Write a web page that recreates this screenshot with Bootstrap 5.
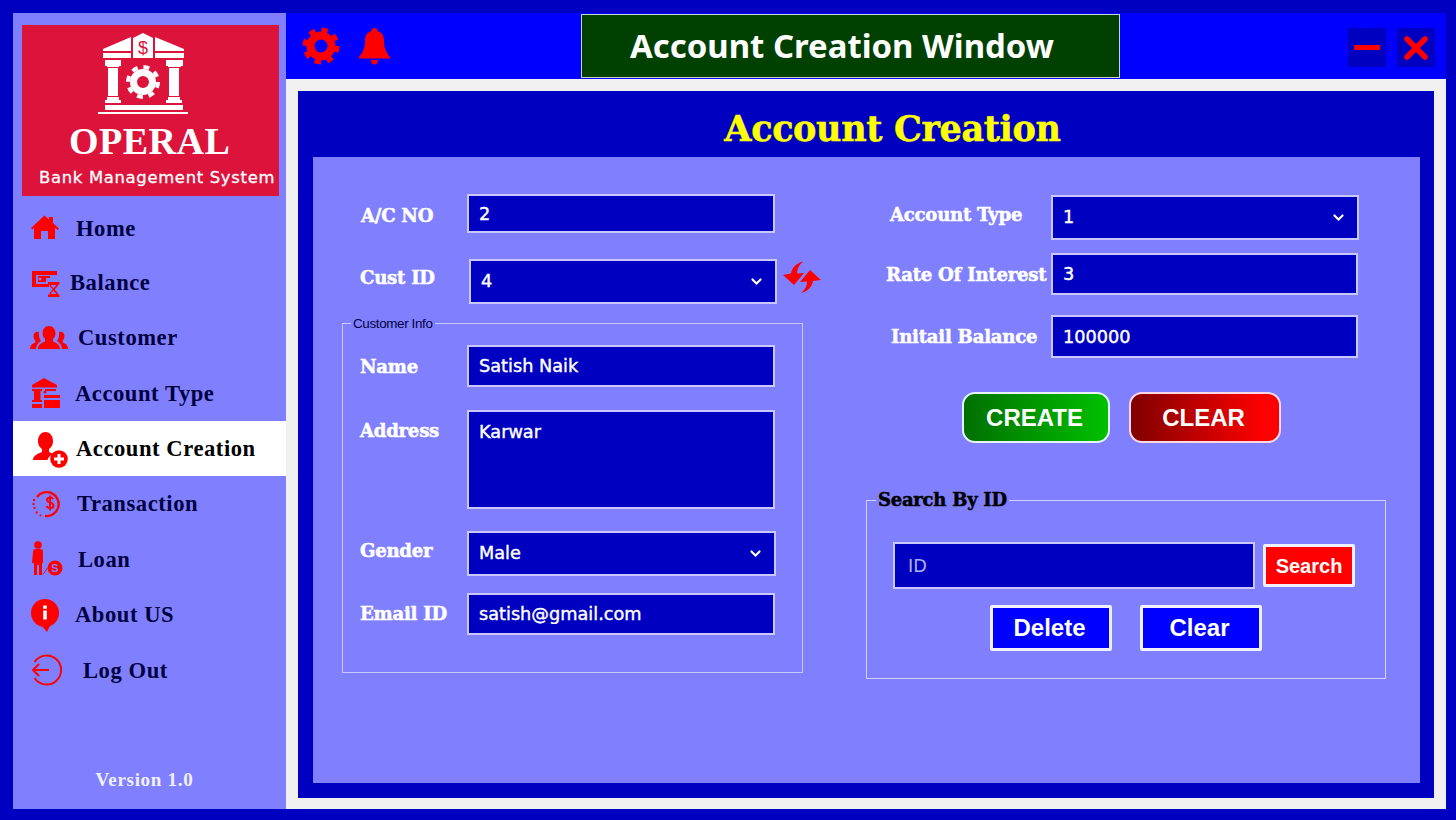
<!DOCTYPE html>
<html lang="en">
<head>
<meta charset="utf-8">
<title>Account Creation</title>
<link href="https://cdn.jsdelivr.net/npm/bootstrap@5.3.0/dist/css/bootstrap.min.css" rel="stylesheet">
<style>
html,body{height:100%;margin:0;overflow:hidden;background:#0000c0}
.app-shell{width:1456px;height:820px;padding:13px 10px 11px 13px;background:#0000c0}
.side-bar{width:273px;background:#8080ff;flex:none}
.logo-box{background:#dc143c;height:171px;margin:12px 7px 0 9px;color:#fff}
.logo-art{display:block;margin:8px 0 0 76px}
.logo-name{font:700 38px/1 "Liberation Serif",serif;margin:5px 0 0 47px;white-space:nowrap;letter-spacing:.5px}
.logo-sub{font:400 16.4px/1 "DejaVu Sans",sans-serif;margin:10px 0 0 17px;white-space:nowrap;letter-spacing:.7px;-webkit-text-stroke:.3px #fff}
.nav-stack{margin-top:3px}
.nav-row{height:55.4px;padding-left:16px;color:#000040;font:700 22.6px/1 "Liberation Serif",serif;text-decoration:none}
.nav-row:hover{color:#000040}
.nav-row.is-current{background:#fff;color:#000}
.nav-row svg{flex:none;width:40px;height:44px}
.nav-row span{padding-top:2px;letter-spacing:.55px}
.nav-row:nth-child(1) span{margin-left:7px;padding-top:5px}
.nav-row:nth-child(2) span{margin-left:1px}
.nav-row:nth-child(3) span{margin-left:9px}
.nav-row:nth-child(4) span{margin-left:6px}
.nav-row:nth-child(5) span{margin-left:7px}
.nav-row:nth-child(6) span{margin-left:8px}
.nav-row:nth-child(7) span{margin-left:9px}
.nav-row:nth-child(8) span{margin-left:6px}
.nav-row:nth-child(9) span{margin-left:14px}
.version-tag{color:#f0f0ff;font:700 19px/1 "Liberation Serif",serif;text-align:center;margin:auto 0 20px 0;padding-right:10px;letter-spacing:.7px}
.main-side{background:#f0f0f0;min-width:0}
.top-bar{height:66px;background:#00f;flex:none;padding:0 11px 0 16px}
.tool-ico{display:block;margin-top:14px;flex:none}
.bell-ico{margin-left:18px}
.title-box{width:539px;height:64px;background:#004000;border:1px solid #c8d8c8;color:#fff;font:700 32.9px/1 "Noto Sans","DejaVu Sans",sans-serif;margin-left:190px;margin-top:1px;padding-right:17px}
.win-btn{width:38px;height:39px;background:#0000c0;border:0;padding:0;margin-left:11px}
.win-zone{margin-left:auto;margin-top:15px}
.outer-panel{margin:12px 12px 11px 12px;background:#0000c0;height:707px;padding:0 14px 15px 15px}
.page-heading{height:66px;margin:0;padding:20px 0 0 52px;text-align:center;color:#ff0;font:700 35px/1 "DejaVu Serif",serif;letter-spacing:-.35px;-webkit-text-stroke:.5px #ff0}
.work-panel{background:#8080ff;height:626px;padding:37px 0 0 29px}
.left-col{width:461px;flex:none}
.right-col{width:520px;flex:none;margin-left:63px}
.field-lbl{font:700 18.1px/1 "DejaVu Serif",serif;color:#fff;letter-spacing:-.25px;white-space:nowrap;margin:0;flex:none;-webkit-text-stroke:.5px #fff}
.dark-field,.dark-field:focus,.dark-field::placeholder{color:#fff}
.dark-field,.dark-field:focus{background-color:#0000c0;border:2px solid #c8c8ff;border-radius:0;font:400 17.7px/1.2 "DejaVu Sans",sans-serif;padding:0 10px;box-shadow:none;height:100%;width:308px;flex:none;-webkit-text-stroke:.4px #fff}
.dark-field.form-select{background-image:url("data:image/svg+xml,%3csvg xmlns='http://www.w3.org/2000/svg' viewBox='0 0 16 16'%3e%3cpath fill='none' stroke='%23fff' stroke-linecap='round' stroke-width='2.6' d='M3 5.5l5 5 5-5'/%3e%3c/svg%3e");background-size:13px 13px;background-position:right 12px center;padding-right:30px}
textarea.dark-field,textarea.dark-field:focus{resize:none;padding-top:10px}
.row-ac{height:39px;margin-left:19px}.row-ac .field-lbl{width:106px;margin-top:6px}
.row-cust{height:45px;margin:26px 0 0 18px}.row-cust .field-lbl{width:109px;margin-bottom:6px}
.sync-ico{margin-left:6px;margin-top:-7px;flex:none}
.info-box{height:358px;margin:11px 0 0;padding:0 0 0 17px;border:1px solid #c8c8ff;min-width:0}
.info-box legend{float:none;width:auto;font:400 13.4px/17px "Liberation Sans",sans-serif;color:#000040;margin:0 0 13px -9px;padding:0 2px;letter-spacing:-.35px}
.form-line .field-lbl{width:107px}
.ln-name{height:42px}.ln-name .field-lbl{margin-top:2px}
.ln-addr{height:99px;margin-top:23px}.ln-gender{height:45px;margin-top:22px}.ln-mail{height:42px;margin-top:17px}
.ln-addr .field-lbl{margin-top:12px}
.ln-gender .field-lbl{margin-bottom:4px}
.ln-gender .dark-field{width:309px}
.right-line{margin-left:20px}
.right-line .field-lbl{width:165px}
.rl-type{height:45px;margin-top:1px;margin-left:24px}.rl-type .field-lbl{width:161px;margin-bottom:4px}
.rl-rate{height:42px;margin-top:13px}.rl-rate .field-lbl{margin-top:2px}
.rl-bal{height:43px;margin-top:20px;margin-left:25px}.rl-bal .field-lbl{width:160px;margin-top:2px}
.rl-rate .dark-field,.rl-bal .dark-field{width:307px}
.action-row{margin:34px 0 0 96px;gap:19px}
.grad-btn{height:51px;border:2px solid #e6f4f4;border-radius:13px;color:#fff;font:700 24px/1 "Liberation Sans",sans-serif;padding:0 3px 0 0}
.grad-btn:hover{color:#fff}
.go-btn{width:148px;background:linear-gradient(90deg,#007000,#00c000)}
.stop-btn{width:152px;background:linear-gradient(90deg,#800000,#f00 90%);border-color:#ffd8e4}
.find-box{height:188px;margin:48px 0 0;padding:0 0 0 26px;border:1px solid #d0d0ff;min-width:0}
.find-box legend{float:none;width:auto;font:700 18px/18px "DejaVu Serif",serif;color:#000;margin:0 0 33px -17px;padding:0 2px;letter-spacing:-.25px;-webkit-text-stroke:.5px #000}
.find-line{height:47px}
.find-line .dark-field{width:362px;padding-left:13px;-webkit-text-stroke:0}
.find-line .dark-field::placeholder{color:#b0b0f0;opacity:1}
.box-btn{border:3px solid #f0f0ff;border-radius:2px;color:#fff;padding:0}
.box-btn:hover{color:#fff}
.red-find{width:92px;height:43px;background:#f00;margin-left:8px;font:700 20px/1 "Liberation Sans",sans-serif}
.blue-act{width:122px;height:46px;background:#00f;font:700 24px/1 "Liberation Sans",sans-serif;padding-right:3px}
.act-line{margin:16px 0 0 97px;gap:28px}
</style>
</head>
<body>
<div class="app-shell d-flex">
  <aside class="side-bar d-flex flex-column">
    <div class="logo-box">
      <svg class="logo-art" width="91" height="84" viewBox="0 0 91 84" fill="#fff">
        <path d="M5 16L33 4v14H5zM5 20h28v5H5z"/>
        <path d="M86 16L57 4v14h29zM86 20H57v5h29z"/>
        <path d="M35 5L45 0l10 5v20H35z"/>
        <text x="45" y="21" font-family="Liberation Sans" font-size="18" text-anchor="middle" fill="#dc143c">$</text>
        <path d="M7 27h16v6h-2v1H9v-1H7zM68 27h17v6h-2v1H70v-1h-2z"/>
        <path d="M10 35h10v28H10zM71 35h10v28H71z"/>
        <path d="M9 64h12v3h2v3H7v-3h2zM70 64h12v3h2v3H68v-3h2z"/>
        <path d="M7 72h78v5H7z"/>
        <path d="M0 79h90v2H0z"/>
        <circle cx="45" cy="49" r="9.500" fill="none" stroke="#fff" stroke-width="7"/>
        <circle cx="45" cy="49" r="15" fill="none" stroke="#fff" stroke-width="4" stroke-dasharray="5.900 5.880"/>
      </svg>
      <div class="logo-name">OPERAL</div>
      <div class="logo-sub">Bank Management System</div>
    </div>
    <nav class="nav-stack d-flex flex-column">
      <a class="nav-row d-flex align-items-center" href="#">
        <svg viewBox="0 0 40 44" fill="#f00"><path d="M2 23L15.500 10.500 20 14.500V12h4v6l6 5.500-1.500 1.500-2.500-2.200V34h-7v-8h-7v8H5V22.800L3.500 24.500z"/></svg><span>Home</span></a>
      <a class="nav-row d-flex align-items-center" href="#">
        <svg viewBox="0 0 40 44" fill="#f00"><path d="M3 11h25v4H7v9h13v3H3z"/><path d="M9 16h12v2h-4v4h-8z"/><circle cx="11" cy="19" r="1.500" fill="#8080ff"/><path d="M19 22h11.500v2.500h-1.500c0 3-3 3.500-3 5 0 1.500 3 2 3 5h1.500V37H19v-2.500h1.500c0-3 3-3.500 3-5 0-1.500-3-2-3-5H19z"/><path d="M22 25h5c-.3 1.600-1.500 2-2.500 3.500-1-1.500-2.200-1.900-2.500-3.500zM22 34c.5-1.500 1.500-2 2.500-3.200 1 1.200 2 1.700 2.500 3.200z" fill="#8080ff"/></svg><span>Balance</span></a>
      <a class="nav-row d-flex align-items-center" href="#">
        <svg viewBox="0 0 40 44" fill="#f00"><path d="M9 34h22c0-4-3-6-7-7.500v-2.500c2-2 2.500-4 2.500-6 0-3.500-2.500-7-6.500-7s-6.500 3.500-6.500 7c0 2 .5 4 2.500 6v2.500C12 28 9 30 9 34z"/><path d="M1 34h6c.2-3.500 2-6 5-8-1.500-2-2.500-5-2-9-3-1-5.500 1-5.500 4 0 2 .8 3.500 1.800 4.500v2C3 28.500 1 30.500 1 34zM39 34h-6c-.2-3.500-2-6-5-8 1.500-2 2.500-5 2-9 3-1 5.500 1 5.500 4 0 2-.8 3.500-1.800 4.500v2c3.300 1 5.300 3 5.300 6.500z"/></svg><span>Customer</span></a>
      <a class="nav-row d-flex align-items-center" href="#">
        <svg viewBox="0 0 40 44" fill="#f00"><path d="M3 14L15 7l13 7v2.500H3z"/><path d="M3 18h10v2h-1.500v9H13v2H3v-2h2v-9H3zM16 18h11v2H16z"/><path d="M15 24h16v3H15zM15 29h16v8H15zM3 33h10v4H3z"/><circle cx="16" cy="21" r="1.500"/></svg><span>Account Type</span></a>
      <a class="nav-row is-current d-flex align-items-center" href="#">
        <svg viewBox="0 0 40 44" fill="#f00"><path d="M4 34c0-4 4-6 9-8v-3c-3-2-4-5-4-8 0-5 3-9 7.500-9S24 10 24 15c0 3-1 6-4 8v3c1.500.5 3 1.200 4 2-3 1.500-5 3.500-5.500 6z"/><circle cx="30" cy="33" r="8.800"/><path d="M28.500 28h3v3.500H35v3h-3.500V38h-3v-3.500H25v-3h3.500z" fill="#fff"/></svg><span>Account Creation</span></a>
      <a class="nav-row d-flex align-items-center" href="#">
        <svg viewBox="0 0 40 44" fill="none" stroke="#f00"><path d="M8 15A12 12 0 1 1 16 34" stroke-width="2.400"/><path d="M4 18h2M3.500 22h2M4.500 26h2M7 30l1.500 1M11 33l1 1" stroke-width="2.200"/><path d="M24 17c-1-2-6-2-6 1s6.500 2 6.500 5.500-6 3-7 .5M21 13.500v15" stroke-width="2"/></svg><span>Transaction</span></a>
      <a class="nav-row d-flex align-items-center" href="#">
        <svg viewBox="0 0 40 44" fill="#f00"><circle cx="9" cy="8" r="3.800"/><path d="M4 14.500c0-1.500 1-2.500 2.500-2.500h5c1.500 0 2.500 1 2.500 2.500V26h-1v12H10V28H8v10H5V26H3z"/><path d="M13.500 37c2 0 2-2.500 5-6" fill="none" stroke="#f00"/><circle cx="26" cy="31" r="7.500"/><text x="26" y="35" font-family="Liberation Sans" font-weight="700" font-size="11" text-anchor="middle" fill="#8080ff">S</text></svg><span>Loan</span></a>
      <a class="nav-row d-flex align-items-center" href="#">
        <svg viewBox="0 0 40 44" fill="#f00"><circle cx="16" cy="21" r="14"/><path d="M11 32l7 8 5-10z"/><path d="M14.200 13.500h3.600v3.200h-3.600zM14.200 18.500h3.600v9h-3.600z" fill="#fff"/></svg><span>About US</span></a>
      <a class="nav-row d-flex align-items-center" href="#">
        <svg viewBox="0 0 40 44" fill="none" stroke="#f00" stroke-width="2"><path d="M5.500 14A14.500 14.500 0 1 1 5.500 30"/><path d="M20 22H4M10 16l-6 6 6 6"/></svg><span>Log Out</span></a>
    </nav>
    <div class="version-tag">Version 1.0</div>
  </aside>
  <main class="main-side flex-grow-1 d-flex flex-column">
    <header class="top-bar d-flex align-items-start">
      <svg class="tool-ico" width="38" height="38" viewBox="0 0 38 38" fill="none" stroke="#f00"><circle cx="19" cy="19" r="10.500" stroke-width="8"/><circle cx="19" cy="19" r="15.500" stroke-width="6" stroke-dasharray="6.080 6.090"/></svg>
      <svg class="tool-ico bell-ico" width="33" height="38" viewBox="0 0 33 38" fill="#f00"><path d="M13.500 4a3 3 0 0 1 6 0c5 1.500 6.500 5 6.500 10 0 7 2 11 6 16v1.500H1V30c4-5 6-9 6-16 0-5 1.500-8.500 6.500-10zM13 33h7c0 3-1.500 4.500-3.500 4.500S13 36 13 33z"/></svg>
      <div class="title-box d-flex align-items-center justify-content-center">Account Creation Window</div>
      <div class="win-zone d-flex">
        <button class="win-btn" type="button" aria-label="Minimize"><svg width="38" height="39" viewBox="0 0 38 39"><path d="M6 17h26v5H6z" fill="#f00"/></svg></button>
        <button class="win-btn" type="button" aria-label="Close"><svg width="38" height="39" viewBox="0 0 38 39"><path d="M10 11l18 18M28 11L10 29" stroke="#f00" stroke-width="5.500" stroke-linecap="round" fill="none"/></svg></button>
      </div>
    </header>
    <section class="outer-panel">
      <h1 class="page-heading">Account Creation</h1>
      <div class="work-panel d-flex">
        <div class="left-col">
          <div class="row-ac d-flex align-items-center"><label class="field-lbl">A/C NO</label><input class="form-control dark-field" value="2"></div>
          <div class="row-cust d-flex align-items-center"><label class="field-lbl">Cust ID</label><select class="form-select dark-field"><option>4</option></select>
            <svg class="sync-ico" width="38" height="34" viewBox="0 0 38 34" fill="#f00"><path d="M20 .5C13 2.500 9 6.500 8 12.500L0 14l11 10 10-12-7 .5C14 8 16 4 20 .5z"/><path d="M18 32c7-2 11-6 12-12l8-1-11-10-10 12 7-.5c0 4.500-2 8.500-6 11.500z"/></svg></div>
          <fieldset class="info-box">
            <legend>Customer Info</legend>
            <div class="form-line ln-name d-flex align-items-center"><label class="field-lbl">Name</label><input class="form-control dark-field" value="Satish Naik"></div>
            <div class="form-line ln-addr d-flex align-items-start"><label class="field-lbl">Address</label><textarea class="form-control dark-field">Karwar</textarea></div>
            <div class="form-line ln-gender d-flex align-items-center"><label class="field-lbl">Gender</label><select class="form-select dark-field"><option>Male</option></select></div>
            <div class="form-line ln-mail d-flex align-items-center"><label class="field-lbl">Email ID</label><input class="form-control dark-field" value="satish@gmail.com"></div>
          </fieldset>
        </div>
        <div class="right-col">
          <div class="right-line rl-type d-flex align-items-center"><label class="field-lbl">Account Type</label><select class="form-select dark-field"><option>1</option></select></div>
          <div class="right-line rl-rate d-flex align-items-center"><label class="field-lbl">Rate Of Interest</label><input class="form-control dark-field" value="3"></div>
          <div class="right-line rl-bal d-flex align-items-center"><label class="field-lbl">Initail Balance</label><input class="form-control dark-field" value="100000"></div>
          <div class="action-row d-flex"><button class="btn grad-btn go-btn" type="button">CREATE</button><button class="btn grad-btn stop-btn" type="button">CLEAR</button></div>
          <fieldset class="find-box">
            <legend>Search By ID</legend>
            <div class="find-line d-flex align-items-center"><input class="form-control dark-field" placeholder="ID"><button class="btn box-btn red-find" type="button">Search</button></div>
            <div class="act-line d-flex"><button class="btn box-btn blue-act" type="button">Delete</button><button class="btn box-btn blue-act" type="button">Clear</button></div>
          </fieldset>
        </div>
      </div>
    </section>
  </main>
</div>
<script src="https://cdn.jsdelivr.net/npm/bootstrap@5.3.0/dist/js/bootstrap.bundle.min.js"></script>
</body>
</html>
